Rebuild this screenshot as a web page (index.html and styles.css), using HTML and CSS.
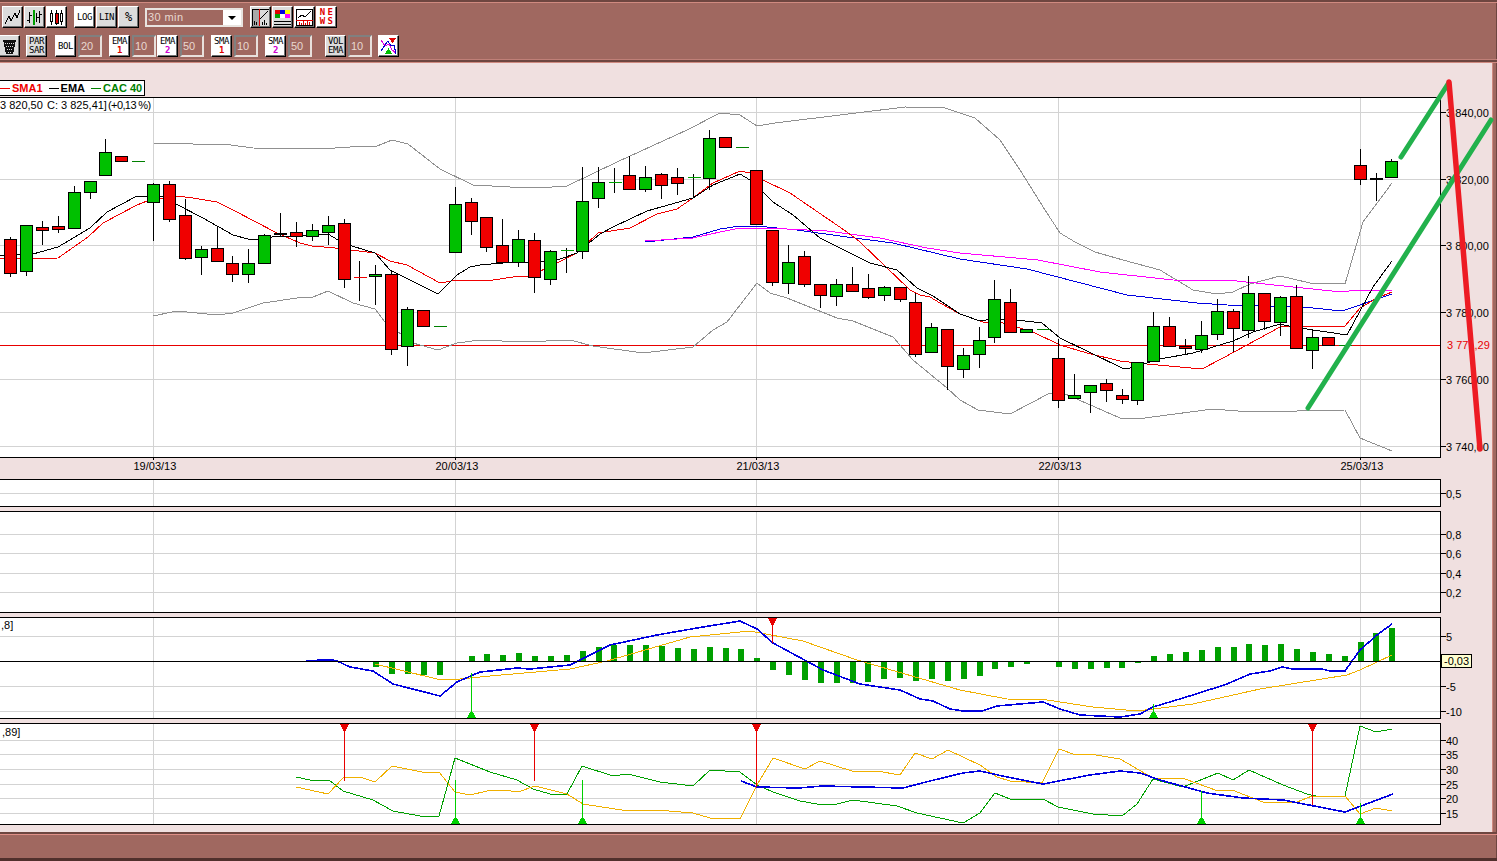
FILE: index.html
```html
<!DOCTYPE html>
<html>
	<head>
		<meta http-equiv="content-type" content="text/html; charset=utf-8" />
		<title>CAC 40</title>
		<link rel="stylesheet" href="styles.css">
	</head>

	<body>
		<div class="window">
			<div class="toolbar">
				<div class="tool-row">
					<div class="tool-group">
						<button class="tool grey"><svg viewBox="0 0 19 19"><polyline class="ico-line" points="2,16 6,8 8,13 12,5 14,10 17,2" /></svg></button>
						<button class="tool grey"><svg viewBox="0 0 19 19"><path class="ico-line" d="M4.5 4V15M2 12H4.5M4.5 7H7M14.5 3V15M12 9H14.5M14.5 6H17" /><rect x="8" y="2" width="2" height="15" fill="#00a000" /><path class="ico-line" d="M11 5V14" /></svg></button>
						<button class="tool white"><svg viewBox="0 0 19 19"><path class="ico-line" d="M4.5 2V17M9.5 2V17M14.5 2V17" /><rect class="ico-line ico-white" x="3.5" y="5.5" width="2" height="8" /><rect class="ico-line ico-red" x="8" y="5.5" width="3" height="10" /><rect class="ico-line ico-white" x="13.5" y="5.5" width="2" height="8" /></svg></button>
					</div>
					<div class="tool-group gap-7">
						<button class="tool white">LOG</button>
						<button class="tool grey">LIN</button>
						<button class="tool grey percent">%</button>
					</div>
					<div class="period gap-6">
						<span class="period-value">30 min</span>
						<span class="period-arrow"></span>
					</div>
					<div class="tool-group gap-7">
						<button class="tool grey"><svg viewBox="0 0 19 19"><rect x="1" y="1" width="7" height="17" fill="#a8a8a8" /><path class="ico-line" d="M1 1H18M1 1V18" /><path class="ico-red-line" d="M8.5 1V18" /><polyline class="ico-line" points="9,11 13,7 17,3" /><path class="ico-line" d="M3.5 13V17M5.5 14V17M11.5 14V17M13.5 12V17M15.5 15V17" /></svg></button>
						<button class="tool grey"><svg viewBox="0 0 19 19"><rect x="2" y="2" width="5" height="4" fill="#e00000" /><rect x="7" y="2" width="5" height="4" fill="#0000e0" /><rect x="12" y="2" width="5" height="4" fill="#ffff00" /><rect x="2" y="6" width="5" height="4" fill="#00a000" /><rect x="7" y="6" width="5" height="4" fill="#fff" /><rect x="12" y="6" width="5" height="4" fill="#ff00ff" /><path class="ico-line" d="M1 13H18M1 16H18" /></svg></button>
						<button class="tool white"><svg viewBox="0 0 19 19"><rect class="ico-line ico-white" x="1.5" y="1.5" width="16" height="16" /><polyline class="ico-line" points="3,10 7,7 10,9 16,3" /><path class="ico-red-line" d="M1 12.5H18M4.5 17V14M6.5 17V15M8.5 17V13M10.5 17V15M12.5 17V13M14.5 17V14" /></svg></button>
						<button class="tool white news">NE<br>WS</button>
					</div>
				</div>
				<div class="tool-row">
					<div class="tool-group first-tool">
						<button class="tool grey"><svg viewBox="0 0 19 19"><polygon points="3,3 16,3 13,17 6,17" fill="#111" /><path class="ico-dots" d="M5 6H14M6 9H13M7 12H12M8 15H11" /></svg></button>
					</div>
					<div class="tool-group gap-6">
						<button class="tool grey">PAR<br>SAR</button>
					</div>
					<div class="tool-group gap-8">
						<button class="tool white">BOL</button>
						<span class="field">20</span>
					</div>
					<div class="tool-group gap-7">
						<button class="tool white">EMA<br><b class="num-red">1</b></button>
						<span class="field">10</span>
						<button class="tool white after-field">EMA<br><b class="num-pink">2</b></button>
						<span class="field">50</span>
					</div>
					<div class="tool-group gap-7">
						<button class="tool white">SMA<br><b class="num-red">1</b></button>
						<span class="field">10</span>
					</div>
					<div class="tool-group gap-7">
						<button class="tool white">SMA<br><b class="num-pink">2</b></button>
						<span class="field">50</span>
					</div>
					<div class="tool-group gap-13">
						<button class="tool grey">VOL<br>EMA</button>
						<span class="field">10</span>
					</div>
					<div class="tool-group gap-6">
						<button class="tool white"><svg viewBox="0 0 19 19"><polyline class="ico-pink" points="2,3 6,9 10,7 13,13 17,16" /><polyline class="ico-blue" points="2,14 6,8 9,4 12,9 15,8 17,17" /><polygon points="10,1 17,1 13.5,6" fill="#e00000" /><polygon points="6,17 13,17 9.5,11" fill="#00c000" /></svg></button>
					</div>
				</div>
			</div>

			<div class="workspace">
				<div class="legend">
					<i class="legend-dash legend-red dash-first"></i><span class="legend-red">SMA1</span>
					<i class="legend-dash legend-black"></i><span class="legend-black">EMA</span>
					<i class="legend-dash legend-green"></i><span class="legend-green">CAC 40</span>
				</div>
				<svg id="price-panel" class="panel price-panel" viewBox="0 97 1492 382"></svg>
				<svg id="volume-panel" class="panel volume-panel" viewBox="0 479 1492 32"></svg>
				<svg id="range-panel" class="panel mid-panel" viewBox="0 511 1492 106"></svg>
				<svg id="macd-panel" class="panel mid-panel" viewBox="0 617 1492 106"></svg>
				<svg id="dmi-panel" class="panel dmi-panel" viewBox="0 723 1492 109"></svg>
			</div>

			<div class="statusbar"></div>

			<svg class="sketch" viewBox="0 0 1497 861">
				<line class="sketch-green" x1="1401" y1="157" x2="1448" y2="84" />
				<line class="sketch-green" x1="1308" y1="408" x2="1491" y2="120" />
				<line class="sketch-red" x1="1449" y1="82" x2="1480" y2="449" />
			</svg>
		</div>

		<script src="chart.js"></script>
	</body>
</html>
```

FILE: styles.css
```css
html, body {
	margin: 0;
	padding: 0;
	overflow: hidden;
}

.window {
	position: relative;
	display: flex;
	flex-direction: column;
	width: 1497px;
	height: 861px;
	overflow: hidden;
	background: #a06860;
	box-shadow: inset -1px 0 0 #6e4640;
	font-family: "Liberation Sans", Arial, sans-serif;
}

.toolbar {
	display: flex;
	flex-direction: column;
	gap: 7px;
	box-sizing: border-box;
	height: 63px;
	padding-top: 4px;
	border-top: 2px solid #6e4640;
	box-shadow: inset 0 1px 0 #d08a80, inset 0 -1px 0 #d08a80, inset 0 -3px 0 #6e4640, inset 0 -4px 0 #c08078;
}

.tool-row {
	display: flex;
	height: 22px;
	padding-left: 2px;
}

.tool-group {
	display: flex;
	gap: 1px;
}

.tool-row:last-child .tool-group {
	gap: 2px;
}

.tool-row:last-child .tool-group .after-field {
	margin-left: -1px;
}

.first-tool {
	margin-left: -3px;
}

.gap-6 { margin-left: 6px; }
.gap-7 { margin-left: 7px; }
.gap-8 { margin-left: 8px; }
.gap-13 { margin-left: 13px; }

.tool {
	box-sizing: border-box;
	width: 21px;
	height: 22px;
	padding: 0;
	border: 1px solid;
	border-color: #fff #000 #000 #fff;
	box-shadow: inset -1px -1px 0 #707070;
	color: #000;
	font-family: "DejaVu Sans Mono", monospace;
	font-size: 9px;
	line-height: 9px;
	letter-spacing: -.4px;
	text-align: center;
}

.tool svg {
	display: block;
	width: 19px;
	height: 19px;
	margin: 0;
	shape-rendering: crispEdges;
}

.tool b {
	font-weight: bold;
}

.grey { background: #dcdcdc; }
.white { background: #fff; }

.tool.percent {
	font-size: 12px;
	letter-spacing: 0;
}

.tool.news {
	color: #e00000;
	font-size: 9px;
	font-weight: bold;
	letter-spacing: 2.4px;
	padding-left: 2px;
}

.num-red { color: #e00000; }
.num-pink { color: #d000d0; }

.field {
	box-sizing: border-box;
	width: 24px;
	height: 22px;
	padding-left: 1px;
	border: 2px solid;
	border-color: #808080 #e8e0dc #e8e0dc #808080;
	background: #a06860;
	color: #e8d8d0;
	font-size: 11px;
	line-height: 18px;
}

.period {
	display: flex;
	box-sizing: border-box;
	width: 98px;
	height: 19px;
	margin-top: 2px;
	border: 2px solid #e8e4e0;
	background: #fff;
}

.period-value {
	flex: 1;
	padding-left: 1px;
	background: #a06860;
	color: #e8d8d0;
	font-size: 11px;
	line-height: 15px;
	letter-spacing: .4px;
}

.period-arrow {
	position: relative;
	width: 18px;
}

.period-arrow::after {
	content: "";
	position: absolute;
	top: 6px;
	left: 5px;
	border-left: 4px solid transparent;
	border-right: 4px solid transparent;
	border-top: 4px solid #000;
}

.workspace {
	box-sizing: border-box;
	height: 769px;
	margin-right: 4px;
	padding-top: 17px;
	border-right: 1px solid #d08a80;
	background: #f0e0e0;
}

.legend {
	box-sizing: border-box;
	display: flex;
	align-items: center;
	width: 145px;
	height: 16px;
	margin-bottom: 1px;
	border: 1px solid #000;
	border-left: 0;
	background: #fff;
	font-size: 11px;
	font-weight: bold;
	line-height: 14px;
	white-space: nowrap;
}

.legend-dash {
	width: 10px;
	height: 1px;
	margin: 0 2px 0 6px;
	background: currentColor;
}

.legend-dash.dash-first {
	margin-left: 0;
}

.legend-red { color: #f00000; }
.legend-black { color: #000; }
.legend-green { color: #008000; }

.panel {
	display: block;
	width: 1492px;
}

.price-panel { height: 382px; }
.volume-panel { height: 32px; }
.mid-panel { height: 106px; }
.dmi-panel { height: 109px; }

.statusbar {
	flex: 1;
	border-top: 2px solid #6e4640;
	border-bottom: 3px solid #50302c;
	box-shadow: inset 0 1px 0 #e09088;
}

.sketch {
	position: absolute;
	top: 0;
	left: 0;
	width: 1497px;
	height: 861px;
	pointer-events: none;
}

.sketch-green {
	stroke: #22b14c;
	stroke-width: 5;
	stroke-linecap: round;
}

.sketch-red {
	stroke: #ed1c24;
	stroke-width: 5.5;
	stroke-linecap: round;
}

/* toolbar icons */
.ico-line { fill: none; stroke: #000; stroke-width: 1; }
.ico-white { fill: #fff; }
.ico-red { fill: #e00000; }
.ico-red-line { fill: none; stroke: #e00000; stroke-width: 1; }
.ico-dots { fill: none; stroke: #ddd; stroke-width: 1; stroke-dasharray: 1 1; }
.ico-pink { fill: none; stroke: #e000e0; stroke-width: 1; }
.ico-blue { fill: none; stroke: #0000d0; stroke-width: 1; }

/* chart */
.panel-bg { fill: #fff; }
.frame { stroke: #000; stroke-width: 1; shape-rendering: crispEdges; }
.grid { stroke: #d3d3d3; stroke-width: 1; shape-rendering: crispEdges; }
.last-line { stroke: #e80000; stroke-width: 1; shape-rendering: crispEdges; }
.series { fill: none; stroke-width: 1; shape-rendering: crispEdges; }
.s-black { stroke: #000; }
.s-red { stroke: #f00000; }
.s-gray { stroke: #909090; }
.s-blue { stroke: #0000e0; }
.s-pink { stroke: #ff00ff; }
.s-orange { stroke: #f0b000; }
.s-green { stroke: #00a000; }
.indicator .s-blue { stroke-width: 1.6; }
.wick { stroke: #000; stroke-width: 1; shape-rendering: crispEdges; }
.body { stroke: #000; stroke-width: 1; shape-rendering: crispEdges; }
.body-r { fill: #f00000; }
.body-g { fill: #00c000; }
.dash { stroke-width: 1; shape-rendering: crispEdges; }
.dash-r { stroke: #f00000; }
.dash-g { stroke: #00a000; }
.dash-k { stroke: #008000; }
.hist { fill: #00a000; shape-rendering: crispEdges; }
.sig-up { fill: #00d000; stroke: #00d000; }
.sig-down { fill: #e80000; stroke: #e80000; }
.sig-up, .sig-down { stroke-width: 1; shape-rendering: crispEdges; }
.axis-text { font-family: "Liberation Sans", Arial, sans-serif; font-size: 11px; fill: #000; }
.axis-red { fill: #e80000; }
.axis-tight { letter-spacing: -.6px; }
.tag { fill: #ffffd0; stroke: #000; stroke-width: 1; shape-rendering: crispEdges; }
```

FILE: chart.js
```js
"use strict";

const SVG_NS = "http://www.w3.org/2000/svg";
const DAYS = [153.5, 455.5, 756.5, 1058.5, 1360.5];
const AXIS_X = 1440.5;

// x, body top, body bottom, wick top, wick bottom, colour
// k = thin dark-green dash, no body
const candles = [
	[10, 239.3, 273.3, 237, 277, "r"], [26, 225.7, 271.3, 225, 276, "g"], [42, 227.3, 230.3, 221, 245, "r"],
	[58, 226.7, 229.3, 216, 233, "r"], [74, 192.3, 228.7, 186, 229, "g"], [90, 181.3, 192.3, 181, 199, "g"],
	[105, 152.3, 175.3, 139, 176, "g"], [121, 156.3, 161.7, 156, 161, "r"], [137, 161.3, 161.3, 161, 161, "k"],
	[153, 184.3, 202.3, 183, 241, "g"], [169, 184.3, 219.3, 181, 222, "r"], [185, 215.3, 258.3, 199, 260, "r"],
	[201, 249.3, 257.3, 246, 275, "g"], [217, 248.3, 261.3, 227, 261, "r"], [232, 263.3, 274.3, 256, 282, "r"],
	[248, 263.3, 274.3, 249, 283, "g"], [264, 235.3, 263.3, 234, 263, "g"], [280, 233.3, 234.7, 213, 237, "g"],
	[296, 232.3, 236.7, 222, 247, "r"], [312, 230.3, 236.3, 224, 241, "g"], [328, 225.3, 232.3, 216, 245, "g"],
	[344, 223.3, 279.3, 219, 288, "r"], [359, 277.3, 277.3, 261, 301, "r"], [375, 274.3, 276.3, 265, 305, "g"],
	[391, 274.3, 349.3, 270, 355, "r"], [407, 309.3, 346.3, 307, 366, "g"], [423, 310.3, 326.3, 310, 326, "r"],
	[439, 326.3, 326.3, 326, 326, "k"], [455, 204.3, 252.3, 187, 252, "g"], [471, 202.3, 221.3, 198, 235, "r"],
	[486, 217.3, 247.3, 217, 252, "r"], [502, 245.3, 262.3, 219, 263, "r"], [518, 239.3, 262.3, 230, 267, "g"],
	[534, 240.3, 277.3, 233, 293, "r"], [550, 251.3, 279.3, 250, 285, "g"], [566, 250.3, 250.3, 248, 273, "g"],
	[582, 201.3, 251.3, 167, 259, "g"], [598, 182.3, 198.3, 167, 208, "g"], [614, 182.3, 182.3, 168, 193, "g"],
	[629, 175.3, 189.3, 156, 189, "r"], [645, 177.3, 189.3, 166, 192, "g"], [661, 174.3, 185.3, 173, 199, "r"],
	[677, 177.3, 183.3, 168, 195, "r"], [693, 177.3, 177.3, 174, 197, "g"], [709, 138.3, 178.3, 130, 190, "g"],
	[725, 137.3, 147.3, 137, 147, "r"], [741, 147.3, 147.3, 147, 147, "k"], [756, 170.3, 224.3, 170, 224, "r"],
	[772, 230.3, 282.3, 230, 286, "r"], [788, 262.3, 283.3, 245, 294, "g"], [804, 256.3, 284.3, 251, 287, "r"],
	[820, 284.3, 295.3, 284, 308, "r"], [836, 284.3, 296.3, 279, 306, "g"], [852, 284.3, 291.3, 267, 292, "r"],
	[868, 288.3, 297.3, 274, 299, "r"], [884, 287.3, 295.3, 286, 301, "g"], [900, 287.3, 299.3, 287, 302, "r"],
	[915, 302.3, 354.3, 293, 357, "r"], [931, 327.3, 352.3, 323, 352, "g"], [947, 329.3, 366.3, 329, 390, "r"],
	[963, 355.3, 369.3, 348, 378, "g"], [979, 340.3, 354.3, 327, 368, "g"], [994, 299.3, 337.3, 280, 343, "g"],
	[1010, 302.3, 332.3, 289, 332, "r"], [1026, 329.3, 332.3, 329, 332, "g"], [1042, 329.3, 329.3, 329, 329, "k"],
	[1058, 358.3, 400.3, 339, 408, "r"], [1074, 395.3, 398.3, 374, 398, "g"], [1090, 385.3, 392.3, 385, 413, "g"],
	[1106, 383.3, 390.3, 379, 402, "r"], [1122, 395.3, 399.3, 389, 404, "r"], [1137, 362.3, 400.3, 362, 405, "g"],
	[1153, 326.3, 361.3, 312, 361, "g"], [1169, 326.3, 346.3, 317, 346, "r"], [1185, 346.3, 348.3, 339, 355, "r"],
	[1201, 335.3, 349.3, 321, 353, "g"], [1217, 311.3, 334.3, 299, 340, "g"], [1233, 311.3, 328.3, 309, 352, "r"],
	[1248, 293.3, 330.3, 276, 338, "g"], [1264, 293.3, 321.3, 293, 330, "r"], [1280, 297.3, 322.3, 296, 336, "g"],
	[1296, 296.3, 348.3, 285, 348, "r"], [1312, 337.3, 350.3, 329, 369, "g"], [1328, 337.3, 345.3, 337, 345, "r"],
	[1344, 345.3, 345.3, 345, 345, "k"], [1360, 165.3, 179.3, 149, 185, "r"], [1376, 178.7, 179.5, 173, 201, "g"],
	[1391, 161.3, 177.7, 159, 177, "g"]
];

const priceLines = {
	"s-gray": [
		"153,143 193,144 223,144 253,148 320,149 350,147 377,146 392,140 408,144 440,169 473,185 510,187 537,188 567,186 617,162 687,130 720,113 740,115 757,126 775,123 840,115 905,107 945,108 975,118 1000,140 1020,170 1045,210 1060,233 1075,242 1095,252 1123,260 1160,270 1193,290 1217,294 1233,292 1250,284 1280,276 1310,283 1345,284 1363,222 1392,183",
		"153,316 177,311 217,315 233,313 263,303 297,298 313,297 328,291 353,303 375,309 385,322 413,343 438,350 457,343 480,340 523,342 570,340 593,346 643,353 693,347 713,330 727,322 757,283 770,293 787,298 837,318 853,321 893,337 913,360 947,388 960,400 978,410 1010,414 1050,393 1063,393 1120,418 1137,419 1213,409 1250,412 1345,410 1360,438 1392,451"
	],
	"s-blue": ["645,242 693,237 720,229 740,226 767,227 797,230 847,237 893,243 960,259 1027,269 1077,282 1127,295 1197,303 1227,305 1303,307 1342,311 1392,294"],
	"s-pink": ["645,241 693,238 720,232 740,228 767,228 827,231 880,238 927,248 960,253 1038,260 1100,272 1173,280 1237,281 1293,287 1342,292 1357,290 1392,290"],
	"s-red": ["0,259 58,258 88,237 103,223 137,205 147,201 177,196 193,198 217,202 233,210 277,233 300,243 312,246 335,248 375,253 390,261 407,265 440,283 457,280 480,280 487,281 513,277 530,276 557,263 577,253 598,233 630,228 657,214 677,209 693,198 713,183 740,171 750,173 763,180 790,193 847,232 860,242 910,290 920,295 930,297 940,303 960,314 983,322 1003,323 1033,332 1060,345 1087,353 1120,361 1147,364 1202,369 1223,358 1247,345 1280,327 1303,326 1345,326 1360,308 1377,298 1392,292"],
	"s-black": ["0,256 33,254 58,247 90,228 107,212 137,196 153,196 163,197 176,204 203,218 233,235 248,239 258,239 272,237 328,234 338,240 352,246 375,253 390,270 438,294 457,275 470,267 480,265 503,263 520,262 540,262 560,259 577,253 600,234 613,227 647,211 693,198 713,185 740,174 750,180 763,192 773,202 793,215 820,238 870,263 897,270 917,288 933,296 960,314 980,321 993,319 1017,320 1042,323 1060,338 1122,368 1130,368 1160,359 1193,353 1233,341 1253,332 1280,324 1293,327 1347,335 1373,287 1392,261"]
};

const macdBars = [
	[376, 667], [392, 674], [408, 674], [424, 675], [440, 675], [456, 662], [472, 656], [487, 654],
	[503, 655], [519, 653], [535, 656], [551, 656], [567, 655], [583, 651], [599, 647], [614, 645],
	[630, 645], [646, 645], [662, 646], [678, 648], [694, 649], [710, 647], [726, 648], [741, 649],
	[757, 658], [773, 670], [789, 675], [805, 680], [821, 683], [837, 683], [853, 683], [868, 682],
	[884, 679], [900, 678], [916, 681], [932, 679], [948, 681], [964, 679], [980, 676], [995, 669],
	[1011, 667], [1027, 664], [1059, 667], [1075, 669], [1091, 669], [1107, 668], [1122, 668], [1138, 663],
	[1154, 656], [1170, 654], [1186, 652], [1202, 650], [1218, 647], [1234, 647], [1249, 644], [1265, 645],
	[1281, 644], [1297, 649], [1313, 652], [1329, 654], [1345, 656], [1361, 642], [1376, 633], [1392, 628]
];

const macdLines = {
	"s-orange": ["375,664 400,670 437,679 460,679 490,676 570,669 607,661 690,637 750,631 803,641 857,660 960,690 1007,699 1047,700 1093,707 1137,711 1193,704 1260,689 1347,675 1360,670 1392,655"],
	"s-blue": ["306,661 322,660 332,660 337,661 350,667 373,671 393,684 440,696 457,682 480,672 490,671 517,668 530,669 570,665 610,645 657,635 703,627 740,621 757,629 773,643 823,670 860,684 900,690 920,699 933,701 950,709 963,711 982,711 997,706 1043,702 1060,709 1080,715 1120,717 1140,714 1153,707 1193,695 1227,684 1250,674 1270,671 1282,667 1293,669 1322,669 1330,671 1345,671 1360,650 1377,635 1392,624"]
};

const dmiLines = {
	"s-green": ["296,777 310,780 329,780 343,791 373,800 393,811 420,816 439,816 455,758 490,772 517,780 533,789 550,794 567,794 582,766 613,776 628,774 660,782 693,786 710,770 740,772 757,785 773,792 800,801 817,804 837,804 853,800 897,806 917,813 963,823 980,813 995,793 1010,799 1043,799 1058,807 1093,814 1122,816 1137,804 1153,779 1183,787 1218,773 1233,780 1249,770 1283,785 1307,794 1320,797 1345,796 1360,726 1376,732 1392,729"],
	"s-orange": ["296,787 328,794 344,777 360,777 375,782 392,766 422,772 439,772 455,792 470,795 487,791 503,790 518,792 535,786 567,794 583,804 628,811 657,810 693,813 710,818 740,819 757,785 773,758 805,769 820,761 852,771 877,771 900,775 915,753 932,759 948,750 980,765 997,777 1010,781 1042,783 1059,749 1073,754 1090,754 1120,759 1153,778 1185,779 1218,791 1232,790 1263,802 1297,802 1312,796 1345,796 1360,814 1376,808 1392,811"],
	"s-blue": ["741,781 757,787 798,788 823,786 903,788 930,781 963,773 980,771 1007,777 1043,784 1090,775 1120,771 1140,773 1160,780 1207,793 1243,798 1283,800 1340,811 1345,812 1393,794"]
};

function add(svg, tag, attrs, text) {
	let el = document.createElementNS(SVG_NS, tag);
	for (let name in attrs) {
		el.setAttribute(name, attrs[name]);
	}
	if (text) {
		el.textContent = text;
	}
	svg.appendChild(el);
	return el;
}

function hline(svg, cls, y, x1, x2) {
	add(svg, "line", { "class": cls, x1: x1, y1: y, x2: x2, y2: y });
}

function vline(svg, cls, x, y1, y2) {
	add(svg, "line", { "class": cls, x1: x, y1: y1, x2: x, y2: y2 });
}

// white box, grid lines, axis ticks and labels; ticks is a list of [y, label]
function frame(svg, top, bottom, ticks) {
	add(svg, "rect", { "class": "panel-bg", x: 0, y: top, width: AXIS_X, height: bottom - top });
	DAYS.forEach(function(x) {
		vline(svg, "grid", x, top, bottom);
	});
	ticks.forEach(function(tick) {
		hline(svg, "grid", tick[0], 0, AXIS_X);
		hline(svg, "frame", tick[0], AXIS_X, AXIS_X + 5);
		add(svg, "text", { "class": "axis-text", x: 1446, y: tick[0] + 4 }, tick[1]);
	});
}

function border(svg, top, bottom) {
	hline(svg, "frame", top, 0, AXIS_X);
	hline(svg, "frame", bottom, 0, AXIS_X);
	vline(svg, "frame", AXIS_X, top, bottom);
}

function lines(svg, set) {
	for (let cls in set) {
		set[cls].forEach(function(points) {
			add(svg, "polyline", { "class": "series " + cls, points: points });
		});
	}
}

function drawCandles(svg) {
	candles.forEach(function(c) {
		let x = c[0] + 0.5;
		let top = Math.floor(c[1]) + 0.5;
		let bottom = Math.floor(c[2]) + 0.5;
		if (c[4] > c[3]) {
			vline(svg, "wick", x, c[3], c[4]);
		}
		if (bottom - top < 1) {
			hline(svg, "dash dash-" + c[5], top, x - 6, x + 7);
		}
		else {
			add(svg, "rect", { "class": "body body-" + c[5], x: x - 6, y: top, width: 12, height: bottom - top });
		}
	});
}

function signalUp(svg, x, y1, bottom) {
	vline(svg, "sig-up", x, y1, bottom);
	add(svg, "polygon", { "class": "sig-up", points: (x - 4) + "," + bottom + " " + (x + 4) + "," + bottom + " " + (x + 1) + "," + (bottom - 6) + " " + (x - 1) + "," + (bottom - 6) });
}

function signalDown(svg, x, top, y2) {
	vline(svg, "sig-down", x, top, y2);
	add(svg, "polygon", { "class": "sig-down", points: (x - 4) + "," + top + " " + (x + 4) + "," + top + " " + (x + 1) + "," + (top + 6) + " " + (x - 1) + "," + (top + 6) });
}

function drawPrice() {
	let svg = document.getElementById("price-panel");
	frame(svg, 97.5, 457.5, [
		[112.5, "3 840,00"], [179.5, "3 820,00"], [245.5, "3 800,00"],
		[312.5, "3 780,00"], [379.5, "3 760,00"], [446.5, "3 740,00"]
	]);
	hline(svg, "last-line", 345.5, 0, AXIS_X);
	add(svg, "text", { "class": "axis-text axis-red", x: 1447, y: 349 }, "3 771,29");
	lines(svg, priceLines);
	drawCandles(svg);
	add(svg, "text", { "class": "axis-text", x: 0, y: 109 }, "3 820,50");
	add(svg, "text", { "class": "axis-text", x: 47, y: 109 }, "C: 3 825,41]");
	add(svg, "text", { "class": "axis-text axis-tight", x: 108, y: 109 }, "(+0,13 %)");
	border(svg, 97.5, 457.5);
	["19/03/13", "20/03/13", "21/03/13", "22/03/13", "25/03/13"].forEach(function(label, i) {
		vline(svg, "frame", DAYS[i], 457, 460);
		add(svg, "text", { "class": "axis-text", x: DAYS[i] - 20, y: 470 }, label);
	});
}

function drawVolume() {
	let svg = document.getElementById("volume-panel");
	frame(svg, 479.5, 506.5, [[493.5, "0,5"]]);
	border(svg, 479.5, 506.5);
}

function drawRange() {
	let svg = document.getElementById("range-panel");
	frame(svg, 511.5, 612.5, [[534.5, "0,8"], [553.5, "0,6"], [573.5, "0,4"], [592.5, "0,2"]]);
	border(svg, 511.5, 612.5);
}

function drawMacd() {
	let svg = document.getElementById("macd-panel");
	svg.classList.add("indicator");
	frame(svg, 617.5, 718.5, [[636.5, "5"], [686.5, "-5"], [711.5, "-10"]]);
	macdBars.forEach(function(b) {
		let top = Math.min(b[1], 661);
		add(svg, "rect", { "class": "hist", x: b[0] - 3, y: top, width: 6, height: Math.abs(b[1] - 661) });
	});
	lines(svg, macdLines);
	hline(svg, "frame", 661.5, 0, AXIS_X);
	signalUp(svg, 471.5, 673, 718);
	signalUp(svg, 1153.5, 704, 718);
	signalDown(svg, 772.5, 618, 643);
	add(svg, "text", { "class": "axis-text", x: 1, y: 629 }, ",8]");
	border(svg, 617.5, 718.5);
	add(svg, "rect", { "class": "tag", x: 1441.5, y: 654.5, width: 30, height: 13 });
	add(svg, "text", { "class": "axis-text", x: 1444, y: 665 }, "-0,03");
}

function drawDmi() {
	let svg = document.getElementById("dmi-panel");
	svg.classList.add("indicator");
	frame(svg, 723.5, 824.5, [
		[740.5, "40"], [754.5, "35"], [769.5, "30"], [784.5, "25"], [798.5, "20"], [813.5, "15"]
	]);
	lines(svg, dmiLines);
	[[344.5, 781], [534.5, 781], [756.5, 787], [1312.5, 805]].forEach(function(s) {
		signalDown(svg, s[0], 724, s[1]);
	});
	[[455.5, 780], [582.5, 780], [1201.5, 791], [1360.5, 803]].forEach(function(s) {
		signalUp(svg, s[0], s[1], 824);
	});
	add(svg, "text", { "class": "axis-text", x: 2, y: 736 }, ",89]");
	border(svg, 723.5, 824.5);
}

drawPrice();
drawVolume();
drawRange();
drawMacd();
drawDmi();
```
